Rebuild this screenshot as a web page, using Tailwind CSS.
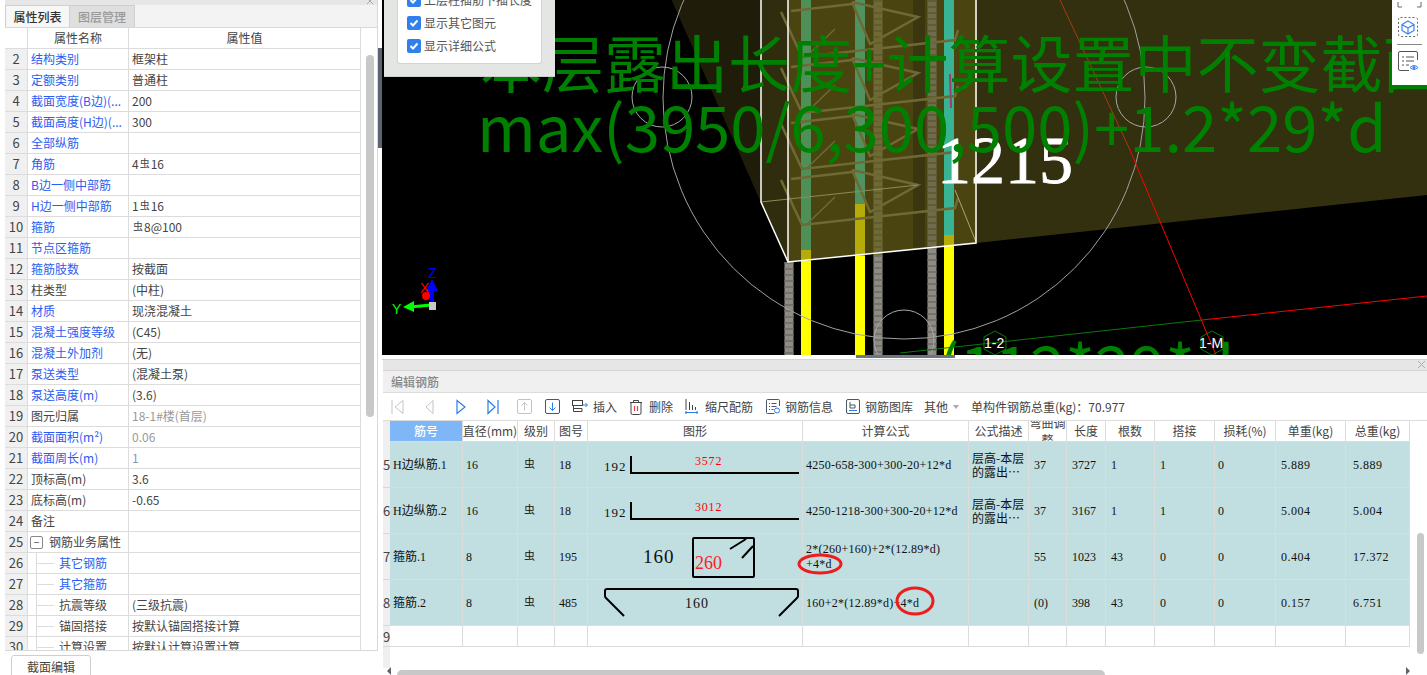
<!DOCTYPE html>
<html>

<head>
    <meta charset="utf-8">
    <script src="https://cdn.jsdelivr.net/npm/@tailwindcss/browser@4"></script>
    <title>编辑钢筋</title>
</head>

<body class="bg-white font-['Noto_Sans_CJK_SC','Noto_Sans',sans-serif] text-[12px] text-[#444] overflow-hidden">
    <div class="flex w-[1427px] h-[675px] overflow-hidden">

        <!-- left: property list -->
        <aside class="w-[378px] h-full pl-[5px] shrink-0">
            <div class="w-[373px] border-r border-[#d8d8d8]">
                <div class="relative h-[5px] bg-[#e6e6e6]">
                    <svg class="absolute right-[4px] -top-[2px]" width="6" height="6" viewBox="0 0 6 6" stroke="#aaa"><path d="M0 0l6 6M6 0l-6 6" /></svg>
                </div>
                <div class="flex h-[23px] bg-[#f3f3f3] border-b border-[#d8d8d8]">
                    <div class="w-[65px] flex items-center justify-center bg-[#f7f7f7] border-x border-t border-[#d0d0d0] font-medium text-[#333]">属性列表</div>
                    <div class="w-[65px] flex items-center justify-center bg-[#dfdfdf] border-r border-t border-[#cfcfcf] font-medium text-[#999]">图层管理</div>
                </div>
                <div class="relative h-[623px] overflow-hidden border-b border-[#d8d8d8]">
                    <div class="flex h-[21px] border-b border-[#dcdcdc] w-[356px]">
                        <div class="w-[23px] border-r border-[#dcdcdc]"></div>
                        <div class="w-[101px] border-r border-[#dcdcdc] flex items-center justify-center">属性名称</div>
                        <div class="w-[232px] border-r border-[#dcdcdc] flex items-center justify-center">属性值</div>
                    </div>
                    <div id="props"></div>
                    <div class="absolute left-[361px] top-[27px] w-[8px] h-[362px] rounded-full bg-[#c8c8c8]"></div>
                </div>
            </div>
            <div class="mt-[4px] ml-[6px] w-[80px] h-[24px] border border-[#cfcfcf] rounded-t-[3px] flex items-center justify-center text-[#444]">截面编辑</div>
        </aside>

        <!-- splitter -->
        <div class="w-[4px] shrink-0 pt-[48px]">
            <div class="w-[4px] h-[100px] bg-[#5b6570]"></div>
        </div>

        <main class="flex-1 flex flex-col min-w-0">
            <!-- 3d view -->
            <div class="relative h-[355px] bg-black overflow-hidden shrink-0">
                <svg class="absolute inset-0" width="1045" height="355" viewBox="382 0 1045 355" fill="none">
                    <defs>
                        <g id="stirrup" stroke="#6f6a35" stroke-width="2.5">
                            <polyline points="781,180 802,225 955,208 958,198" />
                            <polyline points="852,170 870,212 918,185 852,170" />
                            <line x1="791" y1="179" x2="852" y2="172" />
                            <line x1="808" y1="223" x2="835" y2="197" stroke-width="1.5" />
                        </g>
                    </defs>
                    <polygon points="672,0 761,202 788,262 976,243 1427,195 1427,0" fill="#33300f" />
                    <polygon points="672,0 761,202 761,0" fill="#1f1c0a" />
                    <polygon points="761,0 788,0 788,262 761,202" fill="#302d0e" />
                    <polygon points="788,0 977,0 977,243 788,262" fill="#4a4510" />
                    <polygon points="913,0 925,0 925,247 913,248" fill="#3a360f" />

                    <!-- twisted bars -->
                    <line x1="789" y1="262" x2="789" y2="355" stroke="#8e8a84" stroke-width="9" />
                    <line x1="789" y1="262" x2="789" y2="355" stroke="#76726c" stroke-width="9" stroke-dasharray="2 4" />
                    <line x1="878" y1="0" x2="878" y2="255" stroke="#6f6a35" stroke-width="9" />
                    <line x1="878" y1="0" x2="878" y2="255" stroke="#625d2c" stroke-width="9" stroke-dasharray="2 4" />
                    <line x1="878" y1="255" x2="878" y2="355" stroke="#8e8a84" stroke-width="9" />
                    <line x1="878" y1="255" x2="878" y2="355" stroke="#76726c" stroke-width="9" stroke-dasharray="2 4" />
                    <line x1="932" y1="0" x2="932" y2="247" stroke="#6f6a50" stroke-width="9" />
                    <line x1="932" y1="0" x2="932" y2="247" stroke="#625d2c" stroke-width="9" stroke-dasharray="2 4" />
                    <line x1="932" y1="247" x2="932" y2="355" stroke="#8e8a84" stroke-width="9" />
                    <line x1="932" y1="247" x2="932" y2="355" stroke="#76726c" stroke-width="9" stroke-dasharray="2 4" />

                    <!-- coloured bars -->
                    <rect x="801" y="0" width="10" height="250" fill="#4f8f58" />
                    <rect x="801" y="250" width="10" height="11" fill="#b5ac0a" />
                    <rect x="801" y="261" width="10" height="94" fill="#ffff00" />
                    <rect x="855" y="0" width="10" height="204" fill="#4f9460" />
                    <rect x="855" y="204" width="10" height="52" fill="#b5ac0a" />
                    <rect x="855" y="256" width="10" height="99" fill="#ffff00" />
                    <rect x="944" y="0" width="10" height="235" fill="#38b494" />
                    <rect x="944" y="235" width="10" height="11" fill="#b5ac0a" />
                    <rect x="944" y="246" width="10" height="109" fill="#ffff00" />
                    <line x1="950" y1="74" x2="951" y2="108" stroke="#a03a70" stroke-width="2" />

                    <!-- stirrups -->
                    <use href="#stirrup" />
                    <use href="#stirrup" y="-56" />
                    <use href="#stirrup" y="-112" />
                    <use href="#stirrup" y="-168" />

                    <!-- box edges -->
                    <line x1="761" y1="202" x2="918" y2="185" stroke="#8d8a5a" stroke-width="1" />
                    <line x1="955" y1="190" x2="976" y2="242" stroke="#a8a57a" stroke-width="1" />
                    <polyline points="761,0 761,202 788,262 976,243 976,0" stroke="#ffffff" stroke-width="1.5" />
                    <line x1="788" y1="0" x2="788" y2="262" stroke="#ffffff" stroke-width="1.5" />

                    <!-- circles and axes -->
                    <circle cx="904" cy="98" r="241" stroke="#a0a0a0" stroke-width="1" />
                    <circle cx="662" cy="97" r="30" stroke="#a8a8a8" stroke-width="1" />
                    <circle cx="1146" cy="97" r="30" stroke="#a8a8a8" stroke-width="1" />
                    <circle cx="904" cy="340" r="30" stroke="#a8a8a8" stroke-width="1" />
                    <line x1="1060" y1="0" x2="1130" y2="150" stroke="#a83a10" stroke-width="1" />
                    <line x1="1130" y1="150" x2="1216" y2="355" stroke="#ff0000" stroke-width="1" />
                    <line x1="1202" y1="320" x2="1427" y2="296" stroke="#ff0000" stroke-width="1" />
                    <line x1="1202" y1="320" x2="900" y2="353" stroke="#0a7a0a" stroke-width="1" />
                    <polygon points="995,331 1006,337 1006,349 995,355 984,349 984,337" stroke="#0a7a0a" stroke-width="1" />
                    <polygon points="1212,331 1223,337 1223,349 1212,355 1201,349 1201,337" stroke="#0a7a0a" stroke-width="1" />

                    <text x="937" y="183" font-family="Liberation Serif" font-size="68" fill="#ffffff" stroke="#ffffff" stroke-width="0.8">1215</text>
                    <g fill="#008000" font-family="Noto Sans CJK SC">
                        <text x="480" y="88" font-size="62">本层露出长度+计算设置中不变截面</text>
                        <text x="477" y="152" font-size="63.500">max(3950/6,300,500)+1.2*29*d</text>
                        <text x="938" y="392" font-size="63.500">(112*29*d</text>
                    </g>
                    <text x="984" y="348" font-family="Liberation Sans" font-size="14" fill="#ffffff">1-2</text>
                    <text x="1199" y="348" font-family="Liberation Sans" font-size="14" fill="#ffffff">1-M</text>

                    <!-- axis gizmo -->
                    <line x1="431" y1="305" x2="410" y2="307" stroke="#00ff00" stroke-width="3" />
                    <polygon points="403,307 414,301 414,312" fill="#00ff00" />
                    <circle cx="426" cy="296" r="4" fill="#ff0000" />
                    <line x1="432" y1="302" x2="432" y2="285" stroke="#0000ff" stroke-width="4" />
                    <polygon points="432,279 438,291 426,291" fill="#0000ff" />
                    <rect x="429" y="302" width="7" height="8" fill="#c8c8c8" />
                    <text x="428" y="278" font-family="Liberation Sans" font-size="14" fill="#0000ff">Z</text>
                    <text x="420" y="293" font-family="Liberation Sans" font-size="14" fill="#ff0000">X</text>
                    <text x="392" y="314" font-family="Liberation Sans" font-size="14" fill="#00ff00">Y</text>
                </svg>

                <!-- display options popup -->
                <div class="absolute left-[2px] top-0 w-[171px] h-[77px] bg-[#e4e6e4] border-b border-[#cfcfcf]">
                    <div class="ml-[13px] w-[145px] h-[64px] bg-white rounded-b-[3px] border-b border-x border-[#d4d4d4] overflow-hidden pl-[9px]">
                        <div class="flex flex-col gap-[9px] -mt-[7px] text-[#555]">
                            <div class="flex items-center gap-[3px] h-[14px]">
                                <span class="w-[14px] h-[14px] rounded-[2px] bg-[#2f80ed] flex items-center justify-center"><svg width="10" height="10" viewBox="0 0 10 10" fill="none" stroke="#fff" stroke-width="2"><path d="M1.5 5l2.5 2.5 4.5-5" /></svg></span>
                                <span>上层柱插筋下插长度</span>
                            </div>
                            <div class="flex items-center gap-[3px] h-[14px]">
                                <span class="w-[14px] h-[14px] rounded-[2px] bg-[#2f80ed] flex items-center justify-center"><svg width="10" height="10" viewBox="0 0 10 10" fill="none" stroke="#fff" stroke-width="2"><path d="M1.5 5l2.5 2.5 4.5-5" /></svg></span>
                                <span>显示其它图元</span>
                            </div>
                            <div class="flex items-center gap-[3px] h-[14px]">
                                <span class="w-[14px] h-[14px] rounded-[2px] bg-[#2f80ed] flex items-center justify-center"><svg width="10" height="10" viewBox="0 0 10 10" fill="none" stroke="#fff" stroke-width="2"><path d="M1.5 5l2.5 2.5 4.5-5" /></svg></span>
                                <span>显示详细公式</span>
                            </div>
                        </div>
                    </div>
                </div>

                <!-- right view tools -->
                <div class="absolute right-0 top-0 w-[35px] h-[85px] bg-white">
                    <svg width="35" height="85" viewBox="0 0 35 85" fill="none">
                        <path d="M6 2v5h4M25 7h4V2" stroke="#666" stroke-width="1" />
                        <rect x="6.5" y="17.5" width="19" height="19" rx="2" stroke="#666" stroke-dasharray="2 2" />
                        <path d="M16 21l6 3.500v6L16 34l-6-3.500v-6zM10 24.500l6 3.500 6-3.500M16 28v6" stroke="#3b82f6" stroke-width="1.200" />
                        <line x1="5" y1="44.500" x2="30" y2="44.500" stroke="#888" />
                        <path d="M25.500 60V53a1.500 1.500 0 0 0-1.500-1.500H8A1.500 1.500 0 0 0 6.500 53v16A1.500 1.500 0 0 0 8 70.500h9" stroke="#555" />
                        <path d="M10 57h2M14 57h8M10 61h2M14 61h8M10 65h2M14 65h3" stroke="#555" />
                        <path d="M18 67.500q4-4 8 0q-4 4-8 0z" stroke="#3b82f6" />
                        <circle cx="22" cy="67.500" r="1.500" fill="#3b82f6" />
                    </svg>
                </div>
            </div>

            <!-- gap with splitter handle -->
            <div class="h-[5px] shrink-0 pl-[474px] border-b border-[#d4d4d4]">
                <div class="w-[99px] h-[3px] bg-[#6b7681]"></div>
            </div>

            <!-- edit rebar panel -->
            <div class="flex-1 min-h-0 flex flex-col pl-[1px]">
                <div class="relative h-[11px] bg-[#e6e6e6] border-b border-[#d4d4d4] shrink-0">
                    <svg class="absolute right-[2px] top-[1px]" width="7" height="7" viewBox="0 0 7 7" stroke="#aaa"><path d="M0 0l7 7M7 0l-7 7" /></svg>
                </div>
                <div class="h-[22px] bg-[#f0f0f0] border-b border-[#dcdcdc] flex items-center pl-[8px] text-[#888] font-medium shrink-0">编辑钢筋</div>

                <div class="h-[27px] flex items-center shrink-0 text-[#444]">
                    <svg class="ml-[8px] mr-[21px]" width="13" height="16" viewBox="0 0 13 16" fill="none" stroke="#c4c4c4"><path d="M1 1v14M12 1.500v13L4 8z" /></svg>
                    <svg class="mr-[22px]" width="9" height="16" viewBox="0 0 9 16" fill="none" stroke="#c4c4c4"><path d="M8 1.500v13L1 8z" /></svg>
                    <svg class="mr-[21px]" width="10" height="16" viewBox="0 0 10 16" fill="none" stroke="#2b7de9" stroke-width="1.200"><path d="M1 1.500v13L9 8z" /></svg>
                    <svg class="mr-[18px]" width="12" height="16" viewBox="0 0 12 16" fill="none" stroke="#2b7de9" stroke-width="1.200"><path d="M1 1.500v13L8 8zM11 1v14" /></svg>
                    <svg class="mr-[13px]" width="15" height="15" viewBox="0 0 15 15" fill="none" stroke="#c4c4c4"><rect x=".5" y=".5" width="14" height="14" rx="1.500" /><path d="M7.500 11.500v-8M4.500 6.500l3-3 3 3" /></svg>
                    <svg class="mr-[12px]" width="15" height="15" viewBox="0 0 15 15" fill="none"><rect x=".5" y=".5" width="14" height="14" rx="1.500" stroke="#4a5568" /><path d="M7.500 3.500v8M4.500 8.500l3 3 3-3" stroke="#2b7de9" /></svg>
                    <svg class="mr-[5px]" width="16" height="14" viewBox="0 0 16 14" fill="none"><rect x=".5" y=".5" width="10" height="5" stroke="#444" /><path d="M1.500 5.500v6h8.500v-3H1.500" stroke="#444" /><path d="M11 5h4M13.500 3l2 2-2 2" stroke="#2b7de9" /></svg>
                    <span class="w-[24px] mr-[12px] whitespace-nowrap">插入</span>
                    <svg class="mr-[6px]" width="14" height="16" viewBox="0 0 14 16" fill="none"><path d="M1 3.500h12M4.500 3.500V1.500h5v2M2 3.500v10.500a1.500 1.500 0 0 0 1.500 1.500h7a1.500 1.500 0 0 0 1.500-1.500V3.500" stroke="#444" /><path d="M5.500 7v5M8.500 7v5" stroke="#e53e3e" stroke-width="1.200" /></svg>
                    <span class="w-[24px] mr-[12px] whitespace-nowrap">删除</span>
                    <svg class="mr-[7px]" width="13" height="15" viewBox="0 0 13 15" fill="none"><path d="M1 0v11M4.500 3v8M7.500 6v5M10.500 8v3" stroke="#444" /><path d="M0 13.500h13M1 12v3M12 12v3" stroke="#2b7de9" /></svg>
                    <span class="w-[48px] mr-[13px] whitespace-nowrap">缩尺配筋</span>
                    <svg class="mr-[5px]" width="14" height="15" viewBox="0 0 14 15" fill="none"><path d="M13.500 7V1.500a1 1 0 0 0-1-1h-11a1 1 0 0 0-1 1v12a1 1 0 0 0 1 1h7" stroke="#4a5568" /><path d="M3 4.500h1M5.500 4.500h5M3 7.500h1M5.500 7.500h5M3 10.500h1M5.500 10.500h2" stroke="#4a5568" /><circle cx="11" cy="11.500" r="2.500" stroke="#2b7de9" /></svg>
                    <span class="w-[48px] mr-[13px] whitespace-nowrap">钢筋信息</span>
                    <svg class="mr-[5px]" width="14" height="15" viewBox="0 0 14 15" fill="none"><rect x=".5" y=".5" width="13" height="14" rx="1.500" stroke="#4a5568" /><path d="M4 3v6h5V6H4" stroke="#4a5568" /><path d="M3 11.500h8" stroke="#2b7de9" /></svg>
                    <span class="w-[48px] mr-[11px] whitespace-nowrap">钢筋图库</span>
                    <span class="w-[25px] mr-[4px] whitespace-nowrap">其他</span>
                    <span class="w-0 h-0 mr-[12px] border-x-[3px] border-x-transparent border-t-[4px] border-t-[#aaa]"></span>
                    <span class="whitespace-nowrap">单构件钢筋总重(kg)：70.977</span>
                </div>

                <!-- rebar table -->
                <div class="relative flex-1 min-h-0 flex overflow-hidden border-t border-[#dcdcdc]">
                    <div class="w-[7px] shrink-0 h-[247px] bg-[#efefef] text-[13px] text-[#444] leading-none">
                        <div class="h-[21px]"></div>
                        <div class="h-[46px] flex items-center border-b border-[#d8d8d8]">5</div>
                        <div class="h-[46px] flex items-center border-b border-[#d8d8d8]">6</div>
                        <div class="h-[46px] flex items-center border-b border-[#d8d8d8]">7</div>
                        <div class="h-[46px] flex items-center border-b border-[#d8d8d8]">8</div>
                        <div class="h-[21px] flex items-center border-b border-[#d8d8d8]">9</div>
                    </div>
                    <div id="bars" class="w-[1020px] shrink-0"></div>
                    <div class="absolute right-[3px] top-[112px] w-[7px] h-[121px] rounded-full bg-[#c8c8c8]"></div>
                    <div class="absolute left-[14px] bottom-0 w-[708px] h-[5px] rounded-t-full bg-[#c8c8c8]"></div>
                    <div class="absolute left-[4px] bottom-0 w-0 h-0 border-y-[4px] border-y-transparent border-r-[4px] border-r-[#5b6570]"></div>
                    <div class="absolute right-[17px] bottom-0 w-0 h-0 border-y-[4px] border-y-transparent border-l-[4px] border-l-[#5b6570]"></div>
                </div>
            </div>
        </main>
    </div>
</body>
<script>
    const rebarMark = `<span class="text-[10px] relative -top-[2px] mx-[1px]">虫</span>`;

    const props = [
        [2, "结构类别", "框架柱", 1],
        [3, "定额类别", "普通柱", 1],
        [4, "截面宽度(B边)(...", "200", 1],
        [5, "截面高度(H边)(...", "300", 1],
        [6, "全部纵筋", "", 1],
        [7, "角筋", `4${rebarMark}16`, 1],
        [8, "B边一侧中部筋", "", 1],
        [9, "H边一侧中部筋", `1${rebarMark}16`, 1],
        [10, "箍筋", `${rebarMark}8@100`, 1],
        [11, "节点区箍筋", "", 1],
        [12, "箍筋肢数", "按截面", 1],
        [13, "柱类型", "(中柱)", 0],
        [14, "材质", "现浇混凝土", 1],
        [15, "混凝土强度等级", "(C45)", 1],
        [16, "混凝土外加剂", "(无)", 1],
        [17, "泵送类型", "(混凝土泵)", 1],
        [18, "泵送高度(m)", "(3.6)", 1],
        [19, "图元归属", `<span class="text-[#999]">18-1#楼(首层)</span>`, 0],
        [20, "截面面积(m²)", `<span class="text-[#999]">0.06</span>`, 1],
        [21, "截面周长(m)", `<span class="text-[#8a94b8]">1</span>`, 1],
        [22, "顶标高(m)", "3.6", 0],
        [23, "底标高(m)", "-0.65", 0],
        [24, "备注", "", 0],
    ];

    const subProps = [
        [26, "其它钢筋", "", 1],
        [27, "其它箍筋", "", 1],
        [28, "抗震等级", "(三级抗震)", 0],
        [29, "锚固搭接", "按默认锚固搭接计算", 0],
        [30, "计算设置", "按默认计算设置计算", 0],
    ];

    const propRow = (num, nameCell, value) => `
        <div class="flex h-[21px] border-b border-[#dcdcdc] w-[356px]">
            <div class="w-[23px] border-r border-[#dcdcdc] bg-[#f0f0f0] text-[13px] flex items-center justify-center">${num}</div>
            <div class="w-[101px] border-r border-[#dcdcdc] flex items-center whitespace-nowrap overflow-hidden">${nameCell}</div>
            <div class="w-[232px] border-r border-[#dcdcdc] flex items-center pl-[3px] whitespace-pre">${value}</div>
        </div>`;

    let html = "";
    props.forEach(([num, name, value, blue]) => {
        html += propRow(num, `<span class="pl-[3px] ${blue ? "text-[#2b5cf0]" : "text-[#444]"}">${name}</span>`, value);
    });
    html += propRow(25, `<span class="ml-[2px] w-[13px] h-[13px] border border-[#888] rounded-[2px] flex items-center justify-center text-[10px] leading-none">−</span><span class="ml-[6px]">钢筋业务属性</span>`, "");
    subProps.forEach(([num, name, value, blue]) => {
        html += propRow(num, `<span class="relative ml-[8px] w-[23px] h-full shrink-0 border-l border-[#dcdcdc]"><span class="absolute left-0 top-[10px] w-[17px] border-t border-[#dcdcdc]"></span></span><span class="${blue ? "text-[#2b5cf0]" : "text-[#444]"}">${name}</span>`, value);
    });
    document.getElementById("props").innerHTML = html;

    const cols = "grid grid-cols-[73px_55px_37px_33px_215px_166px_60px_38px_39px_49px_60px_61px_70px_64px]";
    const heads = ["直径(mm)", "级别", "图号", "图形", "计算公式", "公式描述", "", "长度", "根数", "搭接", "损耗(%)", "单重(kg)", "总重(kg)"];
    let head = `<div class="flex items-center justify-center bg-[#7eb6f8] text-white font-medium border-r border-b border-[#dcdcdc]">筋号</div>`;
    heads.forEach((h) => {
        head += h
            ? `<div class="flex items-center justify-center border-r border-b border-[#dcdcdc] whitespace-nowrap overflow-hidden">${h}</div>`
            : `<div class="flex items-center justify-center text-center leading-[17px] border-r border-b border-[#dcdcdc] overflow-hidden">弯曲调整</div>`;
    });

    const hookFig = (y, red) => `
        <svg width="214" height="45" viewBox="588 ${y} 214 45" fill="none">
            <text x="604" y="${y + 29}" font-family="Liberation Serif" font-size="13" letter-spacing="1" fill="#111">192</text>
            <path d="M631 ${y + 14}v17h168" stroke="#000" stroke-width="2" />
            <text x="695" y="${y + 23}" font-family="Liberation Serif" font-size="12" letter-spacing=".8" fill="#ff0000">${red}</text>
        </svg>`;

    const stirrupFig = `
        <svg width="214" height="45" viewBox="588 534 214 45" fill="none">
            <text x="643" y="563" font-family="Liberation Serif" font-size="19" letter-spacing="1" fill="#111">160</text>
            <rect x="693" y="538" width="61" height="39" rx="1" stroke="#000" stroke-width="2" />
            <path d="M730 549l16-10M742 558l11-12" stroke="#000" stroke-width="2" />
            <text x="695" y="569" font-family="Liberation Serif" font-size="18" fill="#ff2020">260</text>
        </svg>`;

    const trayFig = `
        <svg width="214" height="45" viewBox="588 580 214 45" fill="none">
            <path d="M624 616l-18-18q-1-1-1-2v-5q0-2 2-2h189q2 0 2 2v5q0 1-1 2l-18 18" stroke="#000" stroke-width="2" />
            <text x="685" y="608" font-family="Liberation Serif" font-size="14" letter-spacing="1" fill="#111">160</text>
        </svg>`;

    const grade = `<span class="text-[11px]">虫</span>`;
    const desc = `<div class="font-['Noto_Sans_CJK_SC',sans-serif] text-[12px] leading-[14px] text-[#111] whitespace-nowrap">层高-本层<br>的露出…</div>`;

    const barRows = [
        ["H边纵筋.1", "16", grade, "18", hookFig(442, "3572"), "4250-658-300+300-20+12*d", desc, "37", "3727", "1", "1", "0", "5.889", "5.889"],
        ["H边纵筋.2", "16", grade, "18", hookFig(488, "3012"), "4250-1218-300+300-20+12*d", desc, "37", "3167", "1", "1", "0", "5.004", "5.004"],
        ["箍筋.1", "8", grade, "195", stirrupFig,
            `<div class="relative leading-[15px]">2*(260+160)+2*(12.89*d)<br>+4*d<svg class="absolute left-[-10px] top-[10px]" width="48" height="24" fill="none"><ellipse cx="24" cy="12" rx="21" ry="9" stroke="#ee1c1c" stroke-width="3" /></svg></div>`,
            "", "55", "1023", "43", "0", "0", "0.404", "17.372"],
        ["箍筋.2", "8", grade, "485", trayFig,
            `<div class="relative whitespace-nowrap">160+2*(12.89*d)+4*d<svg class="absolute left-[88px] top-[-8px]" width="42" height="32" fill="none"><ellipse cx="21" cy="15" rx="18" ry="13" stroke="#ee1c1c" stroke-width="3" /></svg></div>`,
            "", "(0)", "398", "43", "0", "0", "0.157", "6.751"],
    ];

    // left padding per column, read off the reference
    const pads = ["pl-[3px]", "pl-[3px]", "pl-[6px]", "pl-[4px]", "", "pl-[3px] tracking-[0.25px]", "pl-[3px]", "pl-[5px]", "pl-[5px]", "pl-[5px]", "pl-[5px]", "pl-[3px]", "pl-[5px] tracking-[0.5px]", "pl-[7px] tracking-[0.5px]"];

    let body = "";
    barRows.forEach((cells) => {
        cells.forEach((c, i) => {
            body += `<div class="h-[46px] flex items-center bg-[#c1dee0] border-r border-b border-[#dcdcdc] text-[12px] text-[#111] font-['Liberation_Serif','Noto_Sans_CJK_SC',serif] ${pads[i]}">${c}</div>`;
        });
    });
    for (let i = 0; i < 14; i++) {
        body += `<div class="h-[21px] border-r border-b border-[#dcdcdc]"></div>`;
    }

    document.getElementById("bars").innerHTML = `
        <div class="${cols} h-[21px]">${head}</div>
        <div class="${cols}">${body}</div>`;
</script>

</html>
